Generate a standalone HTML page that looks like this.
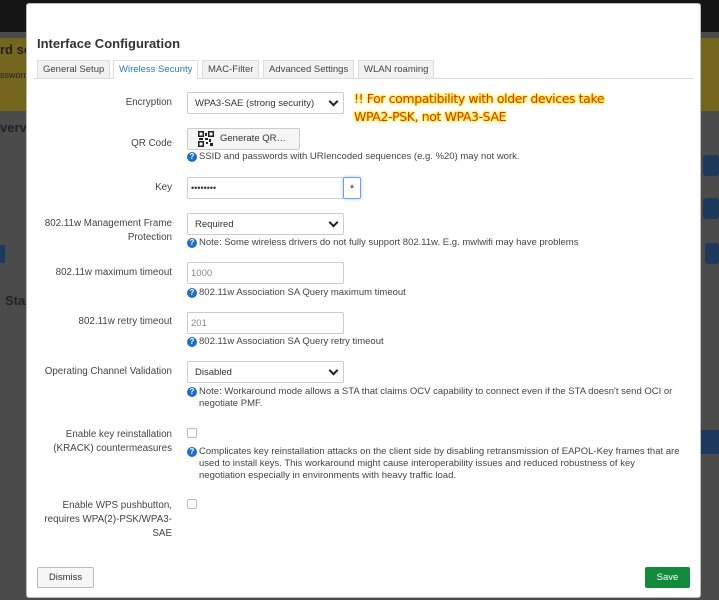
<!DOCTYPE html>
<html><head><meta charset="utf-8"><style>
*{box-sizing:border-box}
body{margin:0;width:719px;height:600px;overflow:hidden;position:relative;background:#4b4b4b;font-family:"Liberation Sans",sans-serif;color:#404040}
.a{position:absolute}
.modal{position:absolute;left:26px;top:3px;width:675px;height:595px;background:#fff;border:1px solid #bbb;border-radius:3px}
.lbl{position:absolute;right:547px;font-size:9.8px;text-align:right;color:#444;line-height:14px}
.sel,.inp{position:absolute;left:187px;width:157px;height:22px;border:1px solid #ccc;border-radius:2px;font-size:9.5px;line-height:21px;padding-left:7px;background:#fff;color:#333}
.sel:after{content:"";position:absolute;right:6px;top:5px;width:5px;height:5px;border-right:2px solid #222;border-bottom:2px solid #222;transform:rotate(45deg)}
.inp{color:#888;padding-left:3px}
.help{position:absolute;left:187px;font-size:9.5px;color:#444;line-height:12px;padding-left:12px}
.help i{position:absolute;left:0;top:1px;width:10px;height:10px;border-radius:50%;background:#1e6fc3;color:#fff;font-style:normal;font-weight:bold;font-size:8px;line-height:10px;text-align:center}
.cb{position:absolute;left:187px;width:10px;height:10px;border:1px solid #bbb;border-radius:2px;background:#fff}
.tab{position:absolute;top:60px;height:18px;border:1px solid #ddd;border-bottom:none;background:#f2f2f2;font-size:9.5px;line-height:17px;padding:0 5px;color:#444}
</style></head><body>
<div class="a" style="left:0;top:0;width:719px;height:32px;background:#151515"></div>
<div class="a" style="left:0;top:38px;width:719px;height:73px;background:#75661f"></div>
<div class="a" style="left:0;top:42px;font-size:13px;font-weight:bold;color:#222">rd se</div>
<div class="a" style="left:0;top:70px;font-size:9px;color:#222">ssword</div>
<div class="a" style="left:0;top:120px;font-size:13px;font-weight:bold;color:#222">verv</div>
<div class="a" style="left:5px;top:293px;font-size:13px;font-weight:bold;color:#222">Sta</div>
<div class="a" style="left:0;top:245px;width:5px;height:18px;background:#1d3a5c"></div>
<div class="a" style="left:703px;top:155px;width:16px;height:21px;background:#1d3a5c;border-radius:3px"></div>
<div class="a" style="left:703px;top:198px;width:16px;height:21px;background:#1d3a5c;border-radius:3px"></div>
<div class="a" style="left:705px;top:243px;width:14px;height:21px;background:#1d3a5c;border-radius:3px"></div>
<div class="a" style="left:701px;top:430px;width:18px;height:24px;background:#1d3a5c"></div>

<div class="modal"></div>
<div class="a" style="left:37px;top:36px;font-size:13px;font-weight:bold;color:#333">Interface Configuration</div>
<div class="a" style="left:34px;top:78px;width:659px;height:1px;background:#ddd"></div>
<div class="tab" style="left:37px">General Setup</div>
<div class="tab" style="left:113px;background:#fff;color:#2a7ab8;height:19px">Wireless Security</div>
<div class="tab" style="left:202px">MAC-Filter</div>
<div class="tab" style="left:263px">Advanced Settings</div>
<div class="tab" style="left:358px">WLAN roaming</div>

<div class="lbl" style="top:96px">Encryption</div>
<div class="sel" style="top:92px">WPA3-SAE (strong security)</div>
<div class="a" style="left:354px;top:90px;font-size:12.5px;line-height:18px;color:#d43a00;font-family:'DejaVu Sans',sans-serif;text-shadow:0 0 3px #ffe000,0 0 3px #ffe000,0 0 2px #ffe000;letter-spacing:-0.4px">!! For compatibility with older devices take<br>WPA2-PSK, not WPA3-SAE</div>

<div class="lbl" style="top:137px">QR Code</div>
<div class="a" style="left:187px;top:128px;width:113px;height:22px;border:1px solid #ccc;border-radius:2px;background:#f6f6f6;font-size:9.5px;line-height:20px;padding-left:32px;color:#333">Generate QR…</div>
<svg class="a" style="left:198px;top:131px" width="16" height="16" viewBox="0 0 16 16"><g fill="#222"><rect x="0" y="0" width="6" height="6"/><rect x="10" y="0" width="6" height="6"/><rect x="0" y="10" width="6" height="6"/><rect x="7" y="2" width="2" height="3"/><rect x="7" y="7" width="3" height="2"/><rect x="11" y="8" width="2" height="3"/><rect x="8" y="11" width="2" height="2"/><rect x="12" y="12" width="3" height="3"/><rect x="1" y="7" width="4" height="2"/></g><g fill="#fff"><rect x="1.5" y="1.5" width="3" height="3"/><rect x="11.5" y="1.5" width="3" height="3"/><rect x="1.5" y="11.5" width="3" height="3"/></g></svg>
<div class="help" style="top:151px"><i>?</i>SSID and passwords with URIencoded sequences (e.g. %20) may not work.</div>

<div class="lbl" style="top:181px">Key</div>
<div class="inp" style="top:177px;width:157px;color:#333;font-size:9px">••••••••</div>
<div class="a" style="left:343px;top:177px;width:18px;height:22px;border:1px solid #6fa4d8;border-radius:2px;box-shadow:0 0 3px #9cc4ec;font-size:11px;text-align:center;line-height:22px;color:#333">*</div>

<div class="lbl" style="top:217px">802.11w Management Frame<br>Protection</div>
<div class="sel" style="top:213px">Required</div>
<div class="help" style="top:237px"><i>?</i>Note: Some wireless drivers do not fully support 802.11w. E.g. mwlwifi may have problems</div>

<div class="lbl" style="top:266px">802.11w maximum timeout</div>
<div class="inp" style="top:262px">1000</div>
<div class="help" style="top:287px"><i>?</i>802.11w Association SA Query maximum timeout</div>

<div class="lbl" style="top:315px">802.11w retry timeout</div>
<div class="inp" style="top:312px">201</div>
<div class="help" style="top:336px"><i>?</i>802.11w Association SA Query retry timeout</div>

<div class="lbl" style="top:365px">Operating Channel Validation</div>
<div class="sel" style="top:361px">Disabled</div>
<div class="help" style="top:386px;width:505px"><i>?</i>Note: Workaround mode allows a STA that claims OCV capability to connect even if the STA doesn't send OCI or negotiate PMF.</div>

<div class="lbl" style="top:428px">Enable key reinstallation<br>(KRACK) countermeasures</div>
<div class="cb" style="top:428px"></div>
<div class="help" style="top:446px;width:495px"><i>?</i>Complicates key reinstallation attacks on the client side by disabling retransmission of EAPOL-Key frames that are used to install keys. This workaround might cause interoperability issues and reduced robustness of key negotiation especially in environments with heavy traffic load.</div>

<div class="lbl" style="top:499px;width:132px">Enable WPS pushbutton, requires WPA(2)-PSK/WPA3-SAE</div>
<div class="cb" style="top:499px"></div>

<div class="a" style="left:37px;top:567px;width:57px;height:21px;border:1px solid #bbb;border-radius:2px;background:#f6f6f6;font-size:9.5px;line-height:19px;text-align:center;color:#333">Dismiss</div>
<div class="a" style="left:645px;top:567px;width:45px;height:21px;border-radius:2px;background:#118a3c;font-size:9.5px;line-height:21px;text-align:center;color:#fff">Save</div>
</body></html>
